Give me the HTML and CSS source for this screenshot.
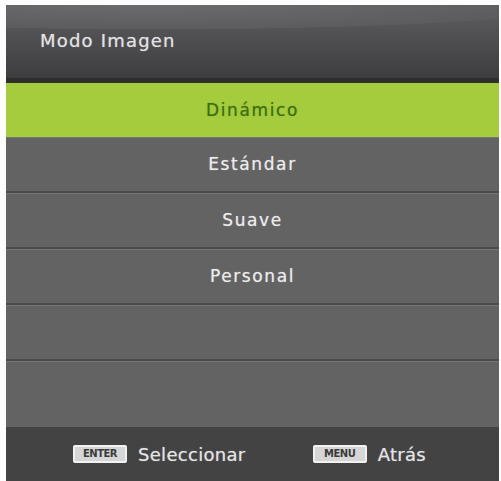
FILE: index.html
```html
<!DOCTYPE html>
<html>
<head>
    <title>Modo Imagen</title>
    <link rel="stylesheet" href="styles.css">
</head>
<body>
    <div class="osd">
        <div class="osd-title">Modo Imagen</div>
        <div class="osd-list">
            <div class="osd-item active">Dinámico</div>
            <div class="osd-item">Estándar</div>
            <div class="osd-item">Suave</div>
            <div class="osd-item">Personal</div>
            <div class="osd-item"></div>
            <div class="osd-item last"></div>
        </div>
        <div class="osd-footer">
            <span class="hint"><span class="key">ENTER</span>Seleccionar</span>
            <span class="hint"><span class="key">MENU</span>Atrás</span>
        </div>
    </div>
</body>
</html>
```

FILE: styles.css
```css
body {
    background-color: #fdfdfd;
    margin: 0;
    padding: 5px 2px 0 6px;
    font-family: "DejaVu Sans", sans-serif;
}

.osd {
    width: 493px;
    height: 476px;
    display: flex;
    flex-direction: column;
    background-color: #636363;
}

.osd-title {
    height: 78px;
    box-sizing: border-box;
    padding: 25px 0 0 34px;
    color: #e2e2e2;
    font-size: 18px;
    letter-spacing: 1.2px;
    text-shadow: 0 0 1px rgba(230,230,230,0.6);
    background: radial-gradient(ellipse 140% 55% at 30% 0%, #6b6b6d 0%, #5c5c5e 60%, rgba(62,62,64,0) 61%),
                linear-gradient(#5e5e60, #3d3d3f);
    border-bottom: 5px solid #2e2e2e;
}

.osd-list {
    flex: 1;
    display: flex;
    flex-direction: column;
}

.osd-item {
    height: 56px;
    box-sizing: border-box;
    display: flex;
    align-items: center;
    justify-content: center;
    color: #ececec;
    font-size: 17px;
    letter-spacing: 1.6px;
    text-shadow: 0 0 1px rgba(236,236,236,0.6);
    border-bottom: 2px solid #4b4b4b;
    box-shadow: inset 0 1px 0 #747474;
}

.osd-item.active {
    height: 54px;
    background-color: #a5cc3d;
    color: #3f6e12;
    text-shadow: 0 0 1px rgba(63,110,18,0.6);
    box-shadow: none;
    border-bottom: 0;
}

.osd-item.last {
    flex: 1;
    border-bottom: 0;
}

.osd-footer {
    height: 54px;
    display: flex;
    align-items: center;
    justify-content: space-between;
    padding: 0 73px 0 67px;
    background-color: #434343;
    color: #e4e4e4;
    font-size: 18px;
    letter-spacing: 0.3px;
    text-shadow: 0 0 1px rgba(228,228,228,0.6);
}

.hint {
    display: flex;
    align-items: center;
    gap: 11px;
}

.key {
    display: inline-block;
    width: 50px;
    height: 14px;
    line-height: 14px;
    text-align: center;
    background-color: #d6d6d6;
    color: #3a3a3a;
    border: 2px solid #f2f2f2;
    border-radius: 2px;
    font-size: 10px;
    font-weight: bold;
    letter-spacing: -0.5px;
    text-shadow: none;
}
```
